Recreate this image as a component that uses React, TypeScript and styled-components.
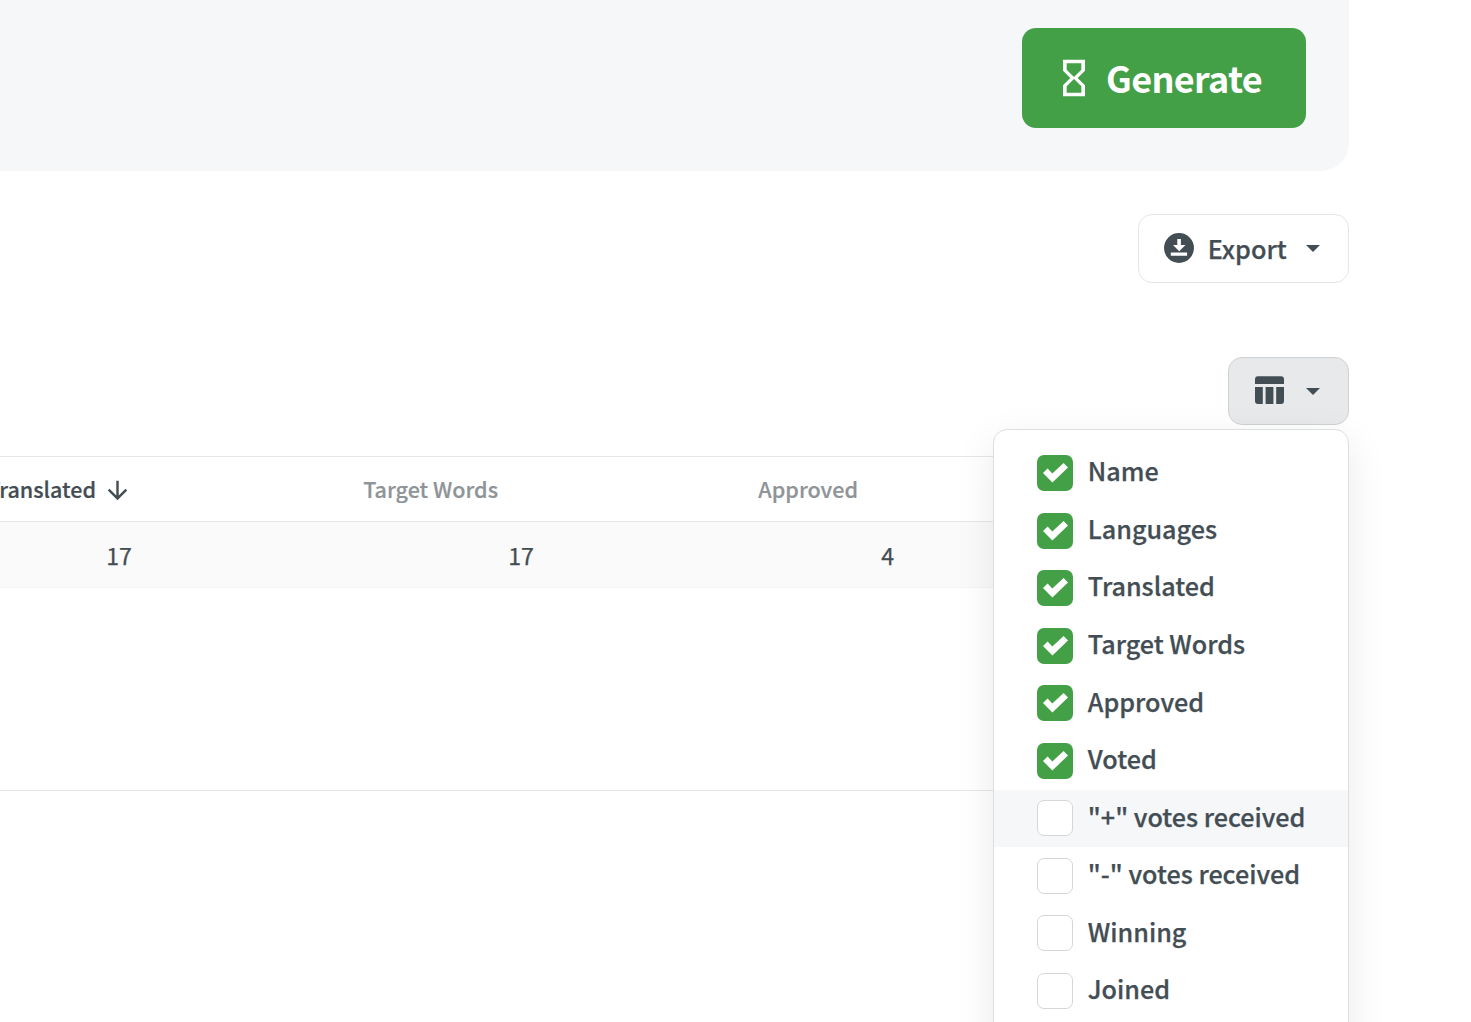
import React from "react";
import styled, { createGlobalStyle } from "styled-components";

const ink = "#434d54";
const green = "#43a047";

const GlobalStyle = createGlobalStyle`
  *, *::before, *::after { box-sizing: border-box; }
  html, body { margin: 0; padding: 0; background: #fff; overflow: hidden; }
  body, button { font-family: "Noto Sans CJK SC", "Noto Sans", sans-serif; }
`;

const Page = styled.main`
  width: 1471px;
  height: 1022px;
  overflow: hidden;
  color: ${ink};
  background: #fff;
`;

const Content = styled.div`
  width: 1349px;
  display: flex;
  flex-direction: column;
`;

const FilterPanel = styled.section`
  height: 171px;
  padding: 28px 43px 0 0;
  display: flex;
  justify-content: flex-end;
  align-items: flex-start;
  background: #f5f7f9;
  border-bottom-right-radius: 28px;
`;

const GenerateButton = styled.button`
  width: 284px;
  height: 100px;
  padding: 0 0 0 30px;
  display: flex;
  align-items: center;
  border: 0;
  border-radius: 14px;
  background: ${green};
  color: #fff;
`;

const GenerateLabel = styled.span`
  margin-left: 10px;
  margin-top: -2px;
  font-size: 36px;
  line-height: 50px;
  font-weight: 700;
  letter-spacing: -0.65px;
`;

const HourglassSvg = styled.svg`
  width: 44px;
  height: 44px;
  margin-top: -1px;
`;

const Toolbar = styled.div<{ $gap: number }>`
  display: flex;
  justify-content: flex-end;
  margin-top: ${(p) => p.$gap}px;
`;

const OutlineButton = styled.button<{ $width: number; $height: number; $active?: boolean }>`
  width: ${(p) => p.$width}px;
  height: ${(p) => p.$height}px;
  padding: 0 28px 0 ${(p) => (p.$active ? 26 : 25)}px;
  display: flex;
  align-items: center;
  color: ${ink};
  border: 1px solid ${(p) => (p.$active ? "#cfd2d4" : "#e4e6e7")};
  border-radius: 14px;
  background: ${(p) => (p.$active ? "#e8e9eb" : "#fff")};
`;

const ButtonIcon = styled.svg`
  flex: none;
  margin-bottom: 2px;
`;

const ExportLabel = styled.span`
  margin-left: 13.7px;
  margin-top: -1px;
  font-size: 25.2px;
  line-height: 36px;
  font-weight: 500;
  -webkit-text-stroke: 0.25px ${ink};
`;

const CaretSvg = styled.svg`
  width: 14px;
  height: 7px;
  margin-left: auto;
`;

const MenuAnchor = styled.div`
  position: relative;
`;

const Menu = styled.ul`
  position: absolute;
  top: 72px;
  right: 0;
  width: 356px;
  height: 640px;
  margin: 0;
  padding: 14.55px 0 0;
  list-style: none;
  border: 1px solid #dcdfe0;
  border-radius: 14px;
  background: #fff;
  box-shadow: 0 12px 40px rgba(0, 0, 0, 0.085);
`;

const MenuItem = styled.li<{ $hovered?: boolean }>`
  height: 57.55px;
  padding: 0 0 0 43px;
  display: flex;
  align-items: flex-start;
  background: ${(p) => (p.$hovered ? "#f5f7f9" : "transparent")};
`;

const CheckBox = styled.span<{ $checked: boolean }>`
  width: 36px;
  height: 36px;
  margin-top: 10.5px;
  flex: none;
  display: block;
  border-radius: 7px;
  background: ${(p) => (p.$checked ? green : "#fff")};
  border: ${(p) => (p.$checked ? "0" : "1px solid #d4d7d9")};

  svg { display: block; }
`;

const MenuLabel = styled.span`
  margin-left: 14.8px;
  margin-top: 7.82px;
  font-size: 25.15px;
  line-height: 36px;
  font-weight: 500;
  white-space: nowrap;
  -webkit-text-stroke: 0.25px ${ink};
`;

const Table = styled.section`
  margin-top: 31px;
  height: 335px;
  border-top: 1px solid #e4e6e7;
  border-bottom: 1px solid #e4e6e7;
`;

const TableRow = styled.div<{ $head?: boolean }>`
  display: grid;
  grid-template-columns: 132px 402px 360px;
  height: ${(p) => (p.$head ? 65 : 66)}px;
  align-items: center;
  background: ${(p) => (p.$head ? "#fff" : "#fafafa")};
  border-bottom: 1px solid ${(p) => (p.$head ? "#e4e6e7" : "#f3f4f4")};
`;

const HeadCell = styled.div<{ $sorted?: boolean; $inset: number }>`
  display: flex;
  justify-content: flex-end;
  align-items: center;
  padding-right: ${(p) => p.$inset}px;
  font-size: 21.55px;
  line-height: 32px;
  font-weight: 500;
  white-space: nowrap;
  color: ${(p) => (p.$sorted ? ink : "#8e9498")};
  -webkit-text-stroke: 0.2px currentColor;
`;

const SortSvg = styled.svg`
  width: 29px;
  height: 29px;
  flex: none;
  margin-left: 7px;
  margin-top: 2px;
`;

const ValueCell = styled.div`
  padding-top: 1px;
  text-align: right;
  font-size: 23.2px;
  line-height: 32px;
  font-weight: 400;
  -webkit-text-stroke: 0.25px ${ink};
`;

const Caret = () => (
  <CaretSvg viewBox="0 0 14 7">
    <path d="M0 0h14L7 7z" fill={ink} />
  </CaretSvg>
);

const columns = [
  { label: "Name", checked: true },
  { label: "Languages", checked: true },
  { label: "Translated", checked: true },
  { label: "Target Words", checked: true },
  { label: "Approved", checked: true },
  { label: "Voted", checked: true },
  { label: '"+" votes received', checked: false, hovered: true },
  { label: '"-" votes received', checked: false },
  { label: "Winning", checked: false },
  { label: "Joined", checked: false },
];

export default function App() {
  return (
    <Page>
      <GlobalStyle />
      <Content>
        <FilterPanel>
          <GenerateButton>
            <HourglassSvg viewBox="0 0 24 24">
              <path
                fill="#fff"
                d="M6 2v6l4 4-4 4v6h12v-6l-4-4 4-4V2H6zm10 14.5V20H8v-3.5l4-4 4 4zm-4-5l-4-4V4h8v3.5l-4 4z"
              />
            </HourglassSvg>
            <GenerateLabel>Generate</GenerateLabel>
          </GenerateButton>
        </FilterPanel>

        <Toolbar $gap={43}>
          <OutlineButton $width={211} $height={69}>
            <ButtonIcon width="30" height="30" viewBox="0 0 30 30">
              <circle cx="15" cy="15" r="15" fill={ink} />
              <path d="M13.3 6h3.6v6h4.6l-6.3 6.3L9 12h4.3zM6.8 19.4h16.3v3.3H6.8z" fill="#fff" />
            </ButtonIcon>
            <ExportLabel>Export</ExportLabel>
            <Caret />
          </OutlineButton>
        </Toolbar>

        <Toolbar $gap={74}>
          <MenuAnchor>
            <OutlineButton $width={121} $height={68} $active>
              <ButtonIcon width="29" height="28" viewBox="0 0 29 28">
                <path
                  fill={ink}
                  d="M3 .3h23a3 3 0 0 1 3 3v4.6H0V3.3a3 3 0 0 1 3-3zM0 11h7.8v17H3a3 3 0 0 1-3-3zM10.6 11h7.8v17h-7.8zM21.2 11H29v14a3 3 0 0 1-3 3h-4.8z"
                />
              </ButtonIcon>
              <Caret />
            </OutlineButton>
            <Menu>
              {columns.map((c) => (
                <MenuItem key={c.label} $hovered={c.hovered}>
                  <CheckBox $checked={c.checked}>
                    {c.checked && (
                      <svg width="36" height="36" viewBox="0 0 36 36">
                        <path d="M6 18l4.6-4.4 4.7 4.8L26.6 8l4.4 4.4-15.6 15z" fill="#fff" />
                      </svg>
                    )}
                  </CheckBox>
                  <MenuLabel>{c.label}</MenuLabel>
                </MenuItem>
              ))}
            </Menu>
          </MenuAnchor>
        </Toolbar>

        <Table>
          <TableRow $head>
            <HeadCell $sorted $inset={0}>
              Translated
              <SortSvg viewBox="0 0 24 24">
                <path
                  fill={ink}
                  d="M20 12l-1.41-1.41L13 16.17V4h-2v12.17l-5.58-5.59L4 12l8 8 8-8z"
                />
              </SortSvg>
            </HeadCell>
            <HeadCell $inset={36}>Target Words</HeadCell>
            <HeadCell $inset={36}>Approved</HeadCell>
          </TableRow>
          <TableRow>
            <ValueCell>17</ValueCell>
            <ValueCell>17</ValueCell>
            <ValueCell>4</ValueCell>
          </TableRow>
        </Table>
      </Content>
    </Page>
  );
}
